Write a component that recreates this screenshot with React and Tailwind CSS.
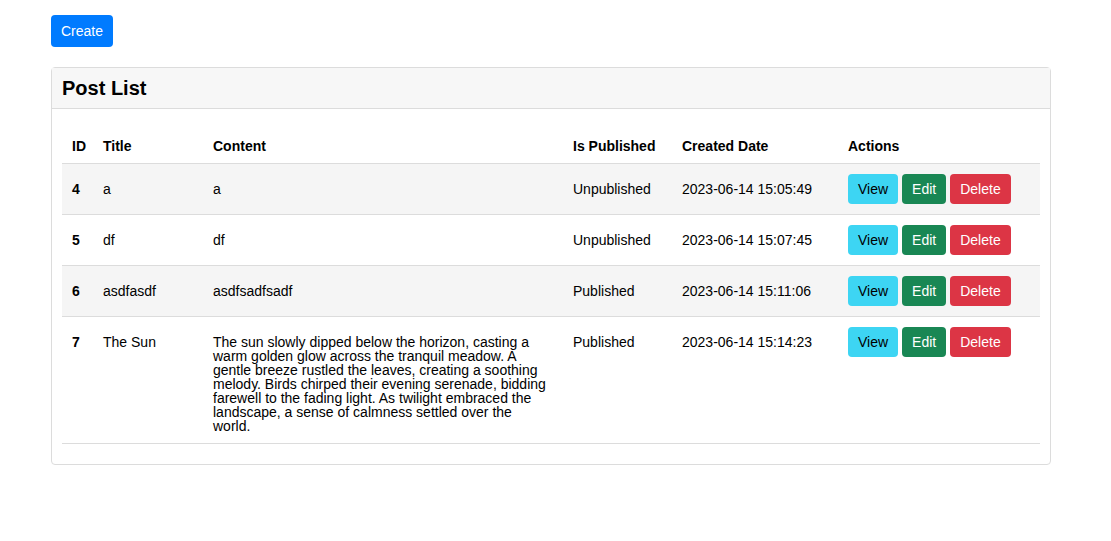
import React from "react";

const posts = [
  { id: 4, title: "a", content: "a", published: false, date: "2023-06-14 15:05:49" },
  { id: 5, title: "df", content: "df", published: false, date: "2023-06-14 15:07:45" },
  { id: 6, title: "asdfasdf", content: "asdfsadfsadf", published: true, date: "2023-06-14 15:11:06" },
  {
    id: 7,
    title: "The Sun",
    content:
      "The sun slowly dipped below the horizon, casting a warm golden glow across the tranquil meadow. A gentle breeze rustled the leaves, creating a soothing melody. Birds chirped their evening serenade, bidding farewell to the fading light. As twilight embraced the landscape, a sense of calmness settled over the world.",
    published: true,
    date: "2023-06-14 15:14:23",
  },
];

const App = () => {
  return (
    <div className="min-h-screen bg-white text-black font-['Liberation_Sans',Arial,sans-serif] text-[14px] leading-[14px] px-[51px] pt-[15px]">
      {/* create button */}
      <button className="h-8 px-[10px] bg-[#007bff] text-white rounded text-[14px]">Create</button>

      {/* post list card */}
      <div className="mt-5 w-[1000px] border border-[#dcdcdc] rounded">
        <div className="h-[41px] bg-[#f7f7f7] border-b border-[#dcdcdc] px-[10px] flex items-center">
          <h2 className="font-bold text-[20px] leading-6">Post List</h2>
        </div>
        <div className="px-[10px] pt-5 pb-5">
          <table className="w-full table-fixed border-collapse">
            <thead>
              <tr className="border-b border-[#dcdcdc] text-left">
                <th className="w-[31px] px-[10px] py-[9px] leading-4 font-bold">ID</th>
                <th className="w-[110px] px-[10px] py-[9px] leading-4 font-bold">Title</th>
                <th className="w-[360px] px-[10px] py-[9px] leading-4 font-bold">Content</th>
                <th className="w-[109px] px-[10px] py-[9px] leading-4 font-bold">Is Published</th>
                <th className="w-[166px] px-[10px] py-[9px] leading-4 font-bold">Created Date</th>
                <th className="w-[202px] px-[10px] py-[9px] leading-4 font-bold">Actions</th>
              </tr>
            </thead>
            <tbody>
              {posts.map((post, i) => (
                <tr
                  key={post.id}
                  className={`border-b border-[#dcdcdc] align-top ${i % 2 === 0 ? "bg-[#f5f5f5]" : "bg-white"}`}
                >
                  <td className="px-[10px] pt-[18px] pb-[10px] font-bold">{post.id}</td>
                  <td className="px-[10px] pt-[18px] pb-[10px]">{post.title}</td>
                  <td className="px-[10px] pt-[18px] pb-[10px]">{post.content}</td>
                  <td className="px-[10px] pt-[18px] pb-[10px]">{post.published ? "Published" : "Unpublished"}</td>
                  <td className="px-[10px] pt-[18px] pb-[10px]">{post.date}</td>
                  <td className="px-[10px] pt-[10px] pb-[10px]">
                    <div className="flex gap-1">
                      <button className="h-[30px] px-[10px] bg-[#3dd5f3] text-black rounded">View</button>
                      <button className="h-[30px] px-[10px] bg-[#198754] text-white rounded">Edit</button>
                      <button className="h-[30px] px-[10px] bg-[#dc3545] text-white rounded">Delete</button>
                    </div>
                  </td>
                </tr>
              ))}
            </tbody>
          </table>
        </div>
      </div>
    </div>
  );
};

export default App;
